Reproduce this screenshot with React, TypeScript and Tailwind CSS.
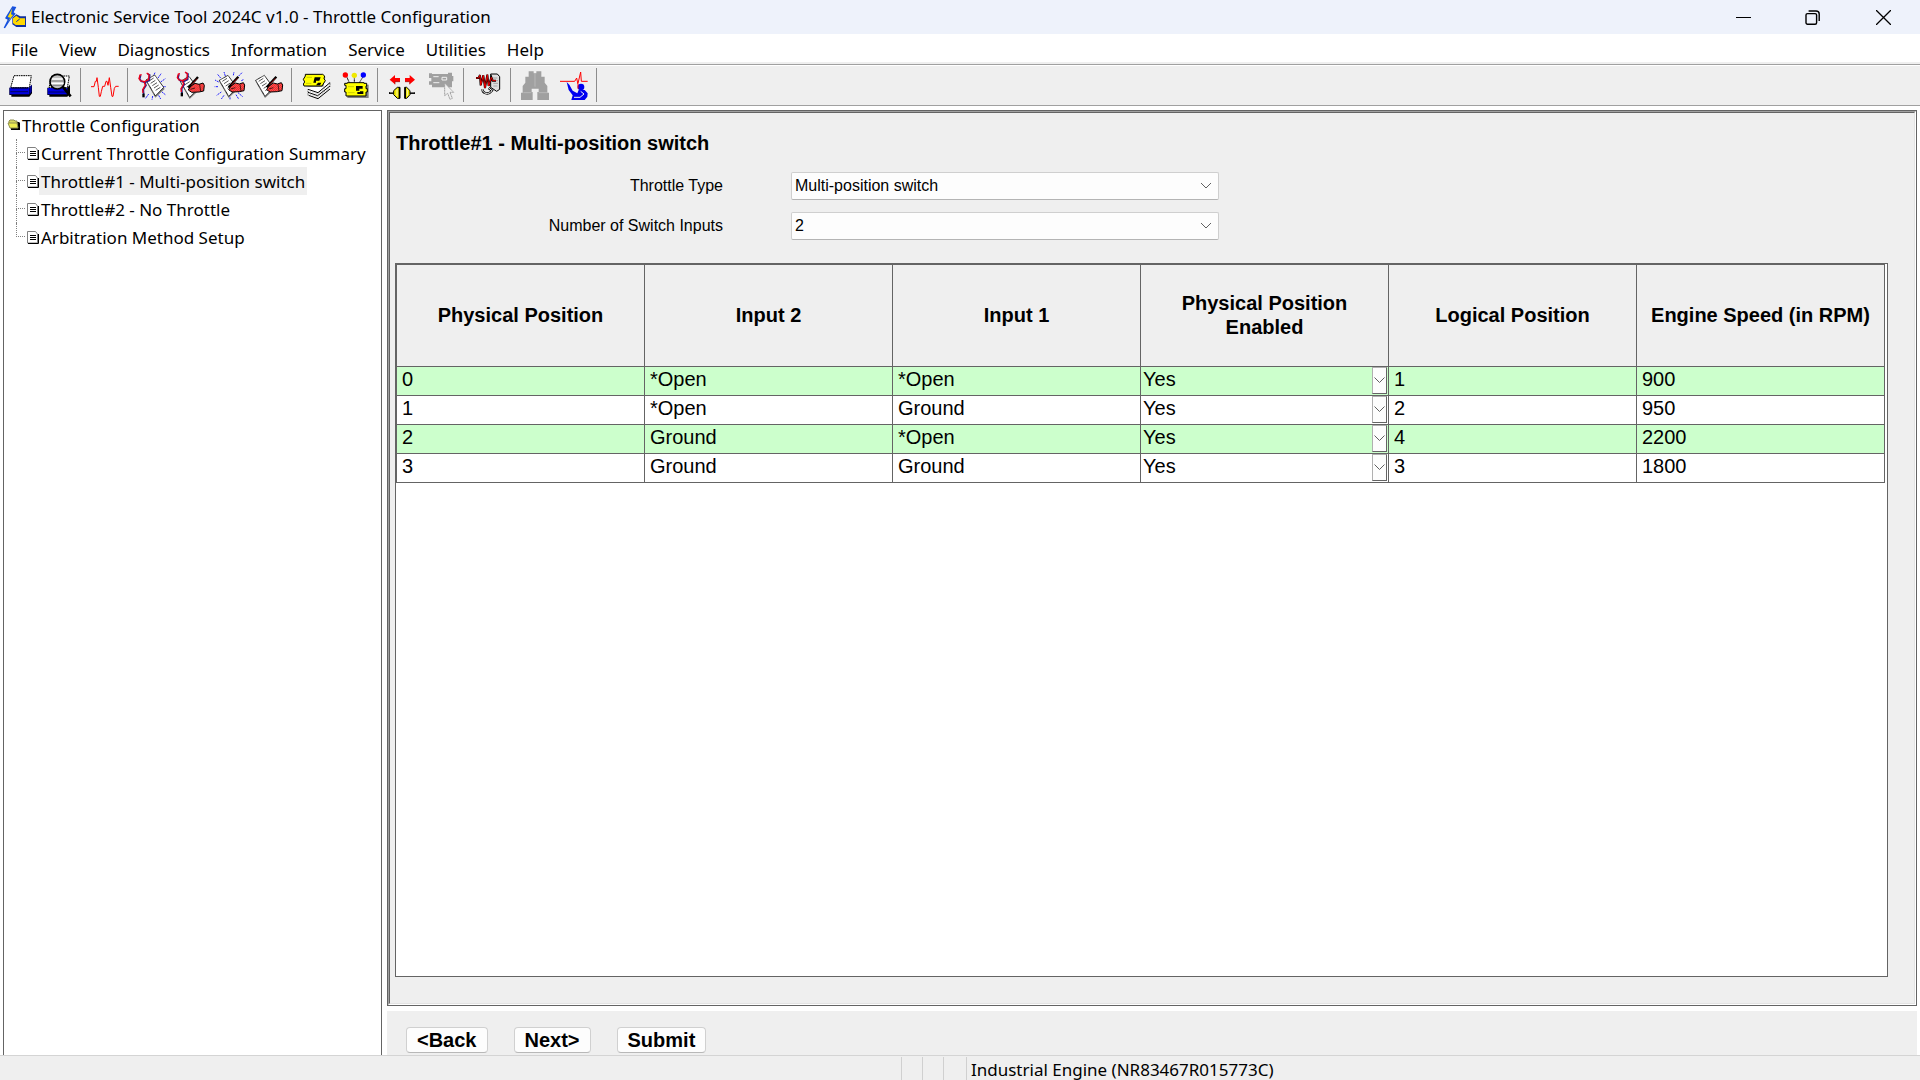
import React from "react";

const DocSheet = ({ x, y }: { x: number; y: number }) => (
  <g transform={`translate(${x} ${y})`}>
    <path d="M0 19 28 68 56 42 52 37 27 62 0 15z" fill="#808080" />
    <path d="M0 15 26 0 53 37 28 63z" fill="#fff" stroke="#000" strokeWidth="3" strokeDasharray="3 1" />
    <path d="M9 18 23 9M14 25 28 16M19 32 33 23M24 39 38 30M29 46 43 37" stroke="#000" strokeWidth="2" />
  </g>
);

const Hand = ({ x, y }: { x: number; y: number }) => (
  <g transform={`translate(${x} ${y})`}>
    <path d="M12 32 18 22 32 12 44 15 56 11 60 18 58 35 44 38 22 39z" fill="#fff" />
    <path d="M12 32 18 22 32 12 44 15 56 11 60 18 58 35 44 38 22 39z" fill="url(#redcheck)" stroke="#000" strokeWidth="3" />
    <path d="M41 -7 12 25" stroke="#000" strokeWidth="7" />
    <path d="M38 -2 20 18" stroke="#d01010" strokeWidth="2" />
    <path d="M18 30 32 26M46 16 49 36" stroke="#000" strokeWidth="2" />
  </g>
);

const Stethoscope = ({ x, y }: { x: number; y: number }) => (
  <g transform={`translate(${x} ${y})`} fill="none">
    <path d="M6 9 3 19 8 27 19 30 32 24 33 8 27 5M18 29 22 39 14 52 15 66" stroke="#202090" strokeWidth="5" />
    <path d="M9 7 4 8 1 19 6 26 18 28 30 22 31 7 24 2M16 28 20 38 12 52 13 62" stroke="#f00018" strokeWidth="4" />
    <path d="M11 64H18V75H11z" fill="#000" />
  </g>
);

const Chip = ({ x, y }: { x: number; y: number }) => (
  <g transform={`translate(${x} ${y})`}>
    <path d="M8 6H72V46H8z" fill="#808080" />
    <path d="M0 8V2H8V0H58V2H66V10H64V18H68V28H64V40H4V28H0V18H4V8z" fill="#ff0" stroke="#000" strokeWidth="3" />
    <path d="M34 10H54V18H44V24H34zM46 26H56V34H38V28H46z" fill="#000" />
    <path d="M10 12H28M10 30H30" stroke="#b4b400" strokeWidth="2" />
  </g>
);

type Tool = { name: string; box: string; art: React.ReactNode; disabled?: boolean };

const groups: Tool[][] = [
  [
    {
      name: "Print", box: "0 198 117 114",
      art: (
        <>
          <path d="M42 227H94L88 263H32z" fill="#fff" stroke="#000" strokeWidth="3" strokeDasharray="5 2" />
          <path d="M28 263H88L96 254V280L88 290H34V285H28z" fill="#000" />
          <path d="M29 263H88V283H29z" fill="#0000e0" />
          <path d="M89 261 95 254V275L89 283z" fill="#0000a0" />
          <path d="M31 275H84" stroke="#000060" strokeWidth="3" />
          <path d="M34 264H84" stroke="#000" strokeWidth="3" />
        </>
      ),
    },
    {
      name: "Print Preview", box: "117 198 117 114",
      art: (
        <>
          <path d="M155 228H208L202 263H147z" fill="#fff" stroke="#000" strokeWidth="3" strokeDasharray="5 2" />
          <path d="M142 263H202L210 254V280L202 290H148V285H142z" fill="#000" />
          <path d="M143 264H202V283H143z" fill="#0000e0" />
          <path d="M145 276H198" stroke="#000060" strokeWidth="3" />
          <circle cx="172" cy="245" r="22" fill="#c0c0c0" stroke="#000" strokeWidth="5" />
          <path d="M156 237H188M154 250H191" stroke="#fff" strokeWidth="5" />
          <path d="M153 243H192M158 256H186" stroke="#808080" strokeWidth="3" />
          <path d="M188 260 212 289" stroke="#000" strokeWidth="8" />
        </>
      ),
    },
  ],
  [
    {
      name: "Status", box: "258 198 117 114",
      art: <path d="M273 260H282L286 244H289L291 233 295 262 298 289H301L304 275 308 259H314L318 244H321L324 256 328 233 332 262 336 289H339L343 265 347 259H356" fill="none" stroke="#f00" strokeWidth="3" />,
    },
  ],
  [
    {
      name: "Active Diagnostics", box: "399 198 117 114",
      art: (
        <>
          <path d="M462 224 466 216M474 234 484 220M482 246 496 236M488 260H498M486 276 496 284M476 286 482 297M458 288 456 299M446 282 436 296" stroke="#2020ff" strokeWidth="3" strokeDasharray="6 2" />
          <DocSheet x={438} y={225} />
          <Stethoscope x={416} y={217} />
        </>
      ),
    },
    {
      name: "Logged Diagnostics", box: "516 198 117 114",
      art: (
        <>
          <DocSheet x={541} y={229} />
          <Stethoscope x={531} y={214} />
          <Hand x={553} y={238} />
        </>
      ),
    },
    {
      name: "Active Events", box: "633 198 117 114",
      art: (
        <>
          <path d="M676 228 672 216M662 234 652 222M656 246 645 240M654 260H644M664 276 650 286M672 286 664 297M690 292V300M708 284 716 297M714 278 728 290M700 226 702 216M716 228 726 218M724 242 732 238" stroke="#2020ff" strokeWidth="3" strokeDasharray="6 2" />
          <DocSheet x={658} y={226} />
          <Hand x={674} y={237} />
        </>
      ),
    },
    {
      name: "Logged Events", box: "750 198 117 114",
      art: (
        <>
          <DocSheet x={767} y={226} />
          <Hand x={788} y={237} />
        </>
      ),
    },
  ],
  [
    {
      name: "Configuration", box: "21 48 117 114",
      art: (
        <>
          <path d="M54 116 92 92 120 104 84 146 56 136z" fill="#fff" />
          <path d="M54 118 84 128 120 98M54 127 83 137 120 108M56 136 84 146 120 117" fill="none" stroke="#000" strokeWidth="3" />
          <path d="M60 132 84 141 116 114M60 123 84 132 116 104" fill="none" stroke="#999" strokeWidth="2" strokeDasharray="4 3" />
          <path d="M54 118V136M120 98V110" stroke="#000" strokeWidth="2" strokeDasharray="3 2" />
          <path d="M44 82H106L100 110H60L44 108z" fill="#808080" />
          <path d="M46 78V73H98L104 78 102 86 106 92 96 108H42L40 102 44 96 40 88z" fill="#ff0" stroke="#000" strokeWidth="3" />
          <path d="M74 82H92L88 92H78V98H70zM84 98H94L90 106H78z" fill="#000" />
          <path d="M50 82H66M48 100H64" stroke="#b4b400" strokeWidth="2" />
        </>
      ),
    },
    {
      name: "Calibrations", box: "138 48 117 114",
      art: (
        <>
          <path d="M170 80 178 98M193 82V98M218 82 208 98" stroke="#000" strokeWidth="3" strokeDasharray="3 1" />
          <circle cx="166" cy="75" r="8" fill="#f00" />
          <circle cx="193" cy="76" r="8" fill="#f0e800" />
          <circle cx="220" cy="75" r="8" fill="#00f" />
          <Chip x={164} y={98} />
        </>
      ),
    },
  ],
  [
    {
      name: "Connect", box: "279 48 117 114",
      art: (
        <>
          <path d="M299 89 315 75V84H330V95H315V103zM375 89 359 75V84H345V95H359V103z" fill="#f00" />
          <path d="M315 103V95H330M359 103V95H345" fill="none" stroke="#900" strokeWidth="2" />
          <path d="M297 129H312M358 129H375" stroke="#000" strokeWidth="6" />
          <path d="M299 128H312M360 128H374" stroke="#bbb" strokeWidth="2" />
          <path d="M330 112H322L311 122V134L322 145H330zM344 112H350L360 122V134L350 145H344z" fill="#f0e800" stroke="#000" strokeWidth="3" />
          <path d="M328 112V145M346 112V145" stroke="#000" strokeWidth="4" />
          <path d="M321 118V138M352 118V138" stroke="#fff" strokeWidth="2" />
        </>
      ),
    },
    {
      name: "Select ECM", box: "396 48 117 114", disabled: true,
      art: (
        <>
          <path d="M417 78V70H426V72H474V68H486V78H490V94H486V112H426V104H417V94H424V84H417z" fill="#a0a0a0" />
          <path d="M430 80H446M430 98H448M456 82H470V90H456z" fill="none" stroke="#efefef" strokeWidth="3" />
          <path d="M464 99V137L473 130 480 148 487 145 480 127H491z" fill="#efefef" stroke="#a0a0a0" strokeWidth="3" strokeDasharray="4 1" />
        </>
      ),
    },
  ],
  [
    {
      name: "Snapshot", box: "537 48 117 114",
      art: (
        <>
          <path d="M602 72H622L629 80V118L620 124 602 112z" fill="#ddd" stroke="#000" strokeWidth="3" />
          <path d="M608 84H622M610 92H624M610 100H624M610 108H622" stroke="#888" strokeWidth="2" />
          <path d="M578 118C576 128 594 138 606 122L596 114" fill="none" stroke="#000" strokeWidth="7" />
          <path d="M578 118C576 128 594 138 606 122L596 114" fill="none" stroke="#fff" strokeWidth="3" />
          <path d="M558 84H566L570 75 572 106 580 76 585 114 592 74 596 108 604 82 608 92H618" fill="none" stroke="#000" strokeWidth="6" />
          <path d="M558 84H566L570 75 572 106 580 76 585 114 592 74 596 108 604 82 608 92H618" fill="none" stroke="#f00000" strokeWidth="3" />
        </>
      ),
    },
  ],
  [
    {
      name: "Search", box: "678 48 117 114", disabled: true,
      art: (
        <>
          <path d="M716 64H731V70H739V64H754V80H764V98L772 108V128H777V150H742V126H746V116H725V126H728V150H693V128H698V108L706 98V80H716z" fill="#a0a0a0" />
          <path d="M700 128H724M746 128H772M735 72V110" stroke="#c4c4c4" strokeWidth="2" />
        </>
      ),
    },
    {
      name: "Web Service", box: "795 48 117 114",
      art: (
        <>
          <path d="M830 96 838 104 848 122 862 130 866 120H884L893 130 892 140 884 150H844L848 136 836 120z" fill="#0000f0" />
          <path d="M872 124 882 132 870 142H852" fill="none" stroke="#efefef" strokeWidth="3" />
          <circle cx="873" cy="111" r="10" fill="#0000f0" />
          <path d="M810 94H854L860 84 864 104 864 116M864 100 872 66 874 94H893" fill="none" stroke="#f00" strokeWidth="3" />
        </>
      ),
    },
  ],
];

const tree = [
  { label: "Current Throttle Configuration Summary" },
  { label: "Throttle#1 - Multi-position switch", selected: true },
  { label: "Throttle#2 - No Throttle" },
  { label: "Arbitration Method Setup" },
];

const columns = ["Physical Position", "Input 2", "Input 1", "Physical Position Enabled", "Logical Position", "Engine Speed (in RPM)"];

const rows = [
  ["0", "*Open", "*Open", "Yes", "1", "900"],
  ["1", "*Open", "Ground", "Yes", "2", "950"],
  ["2", "Ground", "*Open", "Yes", "4", "2200"],
  ["3", "Ground", "Ground", "Yes", "3", "1800"],
];

const Field = ({ id, label, options }: { id: string; label: string; options: string[] }) => (
  <div className="flex h-[28px] items-center">
    <label htmlFor={id} className="w-[328px] shrink-0 text-right text-[16px]">{label}</label>
    <div className="relative ml-[68px] w-[428px]">
      <select id={id} className="block h-[28px] w-full appearance-none rounded-[2px] border border-[#cfcfcf] border-b-[#b4b4b4] bg-[#fdfdfd] pl-[3px] text-[16px]">
        {options.map((o) => <option key={o}>{o}</option>)}
      </select>
      <svg className="pointer-events-none absolute top-[10px] right-[7px]" width="12" height="8" viewBox="0 0 12 8" fill="none" stroke="#606060">
        <path d="M1 1 6 6 11 1" />
      </svg>
    </div>
  </div>
);

export default function App() {
  return (
    <div className="flex h-screen flex-col overflow-hidden bg-white font-['Noto_Sans',sans-serif] text-[17px] text-black">
      <svg width="0" height="0" className="absolute" aria-hidden="true">
        <defs>
          <pattern id="redcheck" width="6" height="6" patternUnits="userSpaceOnUse">
            <path d="M0 0H6V6H0z" fill="#f00000" />
            <path d="M0 0H2V2H0zM3 3H5V5H3z" fill="#fff" />
          </pattern>
        </defs>
      </svg>

      <header className="flex h-[34px] shrink-0 items-center bg-[#eef2fb] pl-[3px]">
        <svg width="24" height="24" viewBox="6 16 72 72" className="shrink-0">
          <path d="M34 20 46 22 38 38 44 42 30 58 12 86 8 84 20 60 12 56z" fill="#1450e0" />
          <path d="M34 26 20 52 28 54 20 68 36 46 30 44z" fill="#ffe000" />
          <path d="M34 54 46 44 58 50H75V82H46L34 74z" fill="#1030a0" />
          <path d="M36 56 46 48 56 56H72V76H44L36 70z" fill="#ffd800" />
          <path d="M46 66 56 58" stroke="#1030a0" strokeWidth="3" />
        </svg>
        <h1 className="ml-1 grow">Electronic Service Tool 2024C v1.0 - Throttle Configuration</h1>
        <div className="flex h-full">
          <button aria-label="Minimize" className="flex w-[69px] items-center justify-center">
            <svg width="15" height="15" stroke="#000"><path d="M0 7.5H15" /></svg>
          </button>
          <button aria-label="Restore" className="flex w-[69px] items-center justify-center">
            <svg width="15" height="15" fill="none" stroke="#000" strokeWidth="1.4">
              <rect x="1" y="3.6" width="10.6" height="10.6" rx="1.5" />
              <path d="M3.6 1H11Q14.2 1 14.2 4V11" />
            </svg>
          </button>
          <button aria-label="Close" className="flex w-[73px] items-center justify-center">
            <svg width="15" height="15" stroke="#000" strokeWidth="1.3"><path d="M0 0 15 15M15 0 0 15" /></svg>
          </button>
        </div>
      </header>

      <nav className="flex h-[28px] shrink-0 items-end gap-[21px] bg-white pl-[11px]">
        {["File", "View", "Diagnostics", "Information", "Service", "Utilities", "Help"].map((m) => (
          <button key={m} className="leading-[24px]">{m}</button>
        ))}
      </nav>

      <div className="shrink-0 border-y border-t-[#efefef] border-b-[#a0a0a0] bg-[#efefef] pt-px">
        <div className="flex h-[41px] border-t border-[#a0a0a0]">
          <div className="flex grow border-t border-white">
            {groups.map((group, g) => (
              <div key={g} className="flex items-start">
                {group.map((t) => (
                  <button key={t.name} aria-label={t.name} disabled={t.disabled}>
                    <svg width="39" height="38" viewBox={t.box} fill="none">{t.art}</svg>
                  </button>
                ))}
                <span className="mt-[2px] mr-[5px] ml-[2px] h-[34px] w-px bg-[#8c8c8c]" />
              </div>
            ))}
          </div>
        </div>
      </div>

      <main className="flex min-h-0 grow gap-[5px] pt-[4px] pr-[3px] pl-[3px]">
        <aside className="w-[379px] shrink-0 border border-b-0 border-[#646464]">
          <div className="flex h-[28px] items-center pl-[3px]">
            <svg width="13" height="12" viewBox="0 0 13 12">
              <path d="M3 3H12L13 4V11H4z" fill="#000" />
              <path d="M2 5V2L3 1H7L8 2H10V5" fill="#d8d860" stroke="#909050" />
              <path d="M1 4H10L11 9H3z" fill="#eeee50" stroke="#909050" />
            </svg>
            <span className="ml-[2px] pt-[2px]">Throttle Configuration</span>
          </div>
          <ul>
            {tree.map((n, i) => (
              <li key={n.label} className="flex h-[28px]">
                <div className="ml-[12px] flex w-[9px] flex-col">
                  <div className="h-[14px] border-b border-l border-dotted border-[#808080]" />
                  {i < tree.length - 1 && <div className="grow border-l border-dotted border-[#808080]" />}
                </div>
                <div className="flex items-center">
                  <svg width="12" height="13" viewBox="0 0 12 13" className="ml-[2px]">
                    <path d="M0.500 0.500H8.500L10.500 3V12H0.500z" fill="#fff" stroke="#808080" />
                    <path d="M11.500 3V12.500H1M3 4.500H9M3 6.500H9M3 8.500H9" fill="none" stroke="#000" />
                  </svg>
                  <button className={n.selected ? "h-[28px] bg-[#efefef] px-[2px] pt-[2px]" : "h-[28px] px-[2px] pt-[2px]"}>{n.label}</button>
                </div>
              </li>
            ))}
          </ul>
        </aside>

        <div className="flex min-w-0 grow flex-col gap-[5px] font-['Liberation_Sans',sans-serif]">
          <section className="flex min-h-0 grow border border-[#646464]">
            <div className="flex min-w-0 grow border border-t-[#a0a0a0] border-r-white border-b-white border-l-[#a0a0a0]">
              <div className="flex min-w-0 grow flex-col border border-t-[#646464] border-r-[#e3e3e3] border-b-[#e3e3e3] border-l-[#646464] bg-[#efefef] pt-[18px] pr-[26px] pb-[26px] pl-[5px]">
                <h2 className="pl-px text-[20px] leading-[24px] font-bold">Throttle#1 - Multi-position switch</h2>
                <div className="mt-[17px] mb-[23px] flex flex-col gap-[12px]">
                  <Field id="type" label="Throttle Type" options={["Multi-position switch", "No Throttle"]} />
                  <Field id="inputs" label="Number of Switch Inputs" options={["2", "3", "4"]} />
                </div>
                <div className="min-h-0 grow border border-[#646464] bg-white pr-[2px]">
                  <table className="w-full table-fixed border-separate border-spacing-0 border-t border-l border-[#646464] text-[20px]">
                    <thead>
                      <tr className="h-[102px] bg-[#efefef]">
                        {columns.map((c) => (
                          <th key={c} className="border-r border-b border-[#646464] px-2 pt-0 pb-[2px] leading-[24px] font-bold">{c}</th>
                        ))}
                      </tr>
                    </thead>
                    <tbody>
                      {rows.map((r, i) => (
                        <tr key={i} className={i % 2 ? "h-[29px] bg-white" : "h-[29px] bg-[#ccffcc]"}>
                          {r.map((v, c) =>
                            c === 3 ? (
                              <td key={c} className="border-r border-b border-[#646464] p-0">
                                <div className="relative h-[28px]">
                                  <select aria-label={`Position ${r[0]} enabled`} className="block h-[24px] w-full appearance-none bg-transparent pl-[2px] leading-[24px]">
                                    <option>Yes</option>
                                    <option>No</option>
                                  </select>
                                  <span className="pointer-events-none absolute top-0 right-[1px] flex h-[27px] w-[15px] items-center justify-center border border-t-[#b0b0b0] border-r-[#646464] border-b-[#646464] border-l-[#b0b0b0] bg-[#fdfdfd]">
                                    <svg width="11" height="7" fill="none" stroke="#606060"><path d="M0.500 0.500 5.500 5.500 10.500 0.500" /></svg>
                                  </span>
                                </div>
                              </td>
                            ) : (
                              <td key={c} className="border-r border-b border-[#646464] p-0 pb-[4px] pl-[5px] leading-[24px]">{v}</td>
                            ),
                          )}
                        </tr>
                      ))}
                    </tbody>
                  </table>
                </div>
              </div>
            </div>
          </section>

          <footer className="flex h-[44px] shrink-0 items-start gap-[26px] bg-[#efefef] pt-[16px] pl-[19px] text-[20px] font-bold">
            {["<Back", "Next>", "Submit"].map((b) => (
              <button key={b} className="h-[26px] rounded-[4px] border border-[#d0d0d0] border-b-[#b8b8b8] bg-[#fdfdfd] px-[10px] leading-[24px]">{b}</button>
            ))}
          </footer>
        </div>
      </main>

      <div className="flex h-[25px] shrink-0 items-center border-t border-[#d4d4d4] bg-[#efefef]">
        <div className="flex h-full w-[967px] shrink-0 justify-end pt-px">
          <span className="w-[21px] border-l border-[#d0d0d0]" />
          <span className="w-[21px] border-l border-[#d0d0d0]" />
          <span className="w-[24px] border-x border-[#d0d0d0]" />
        </div>
        <span className="ml-[4px] pt-[4px] leading-[24px]">Industrial Engine (NR83467R015773C)</span>
      </div>
    </div>
  );
}
